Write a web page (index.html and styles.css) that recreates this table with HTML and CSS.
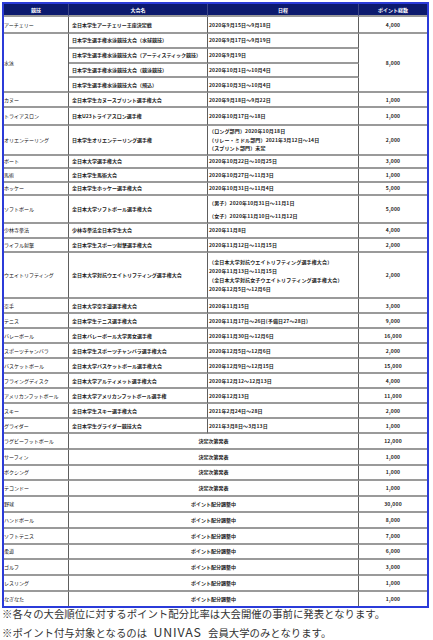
FILE: index.html
```html
<!DOCTYPE html>
<html lang="ja">
<head>
<meta charset="utf-8">
<title>ポイント配分</title>
<link rel="stylesheet" href="styles.css">
</head>
<body>
<div class="page">
<table class="pts">
<colgroup><col class="c1"><col class="c2"><col class="c3"><col class="c4"></colgroup>
<thead>
<tr class="rh"><th>競技</th><th>大会名</th><th>日程</th><th class="lc">ポイント総数</th></tr>
</thead>
<tbody>
<tr class="r17"><td class="sp">アーチェリー</td><td class="ev">全日本学生アーチェリー王座決定戦</td><td class="dt">2020年9月15日～9月18日</td><td class="pt">4,000</td></tr>
<tr class="rs"><td class="sp" rowspan="4">水泳</td><td class="ev">日本学生選手権水泳競技大会（水球競技）</td><td class="dt">2020年9月17日～9月19日</td><td class="pt" rowspan="4">8,000</td></tr>
<tr class="rs"><td class="ev">日本学生選手権水泳競技大会（アーティスティック競技）</td><td class="dt">2020年9月19日</td></tr>
<tr class="rs"><td class="ev">日本学生選手権水泳競技大会（競泳競技）</td><td class="dt">2020年10月1日～10月4日</td></tr>
<tr class="rs"><td class="ev">日本学生選手権水泳競技大会（飛込）</td><td class="dt">2020年10月3日～10月4日</td></tr>
<tr class="r15"><td class="sp">カヌー</td><td class="ev">全日本学生カヌースプリント選手権大会</td><td class="dt">2020年9月18日～9月22日</td><td class="pt">1,000</td></tr>
<tr class="r18"><td class="sp">トライアスロン</td><td class="ev">日本U23トライアスロン選手権</td><td class="dt">2020年10月17日～18日</td><td class="pt">1,000</td></tr>
<tr class="ror"><td class="sp">オリエンテーリング</td><td class="ev">日本学生オリエンテーリング選手権</td><td class="dt ml-or">（ロング部門）2020年10月18日<br>（リレー・ミドル部門）2021年3月12日～14日<br>（スプリント部門）未定</td><td class="pt">2,000</td></tr>
<tr class="r135"><td class="sp">ボート</td><td class="ev">全日本大学選手権大会</td><td class="dt">2020年10月22日～10月25日</td><td class="pt">3,000</td></tr>
<tr class="r135"><td class="sp">馬術</td><td class="ev">全日本学生馬術大会</td><td class="dt">2020年10月27日～11月3日</td><td class="pt">1,000</td></tr>
<tr class="r135"><td class="sp">ホッケー</td><td class="ev">全日本学生ホッケー選手権大会</td><td class="dt">2020年10月31日～11月4日</td><td class="pt">5,000</td></tr>
<tr class="rsb"><td class="sp">ソフトボール</td><td class="ev">全日本大学ソフトボール選手権大会</td><td class="dt ml-sb">（男子）2020年10月31日～11月1日<br>（女子）2020年11月10日～11月12日</td><td class="pt">5,000</td></tr>
<tr class="r145"><td class="sp">少林寺拳法</td><td class="ev">少林寺拳法全日本学生大会</td><td class="dt">2020年11月8日</td><td class="pt">4,000</td></tr>
<tr class="r145"><td class="sp">ライフル射撃</td><td class="ev">全日本学生スポーツ射撃選手権大会</td><td class="dt">2020年11月12日～11月15日</td><td class="pt">2,000</td></tr>
<tr class="rwl"><td class="sp">ウエイトリフティング</td><td class="ev">全日本大学対抗ウエイトリフティング選手権大会</td><td class="dt ml-wl">（全日本大学対抗ウエイトリフティング選手権大会）<br>2020年11月13日～11月15日<br>（全日本大学対抗女子ウエイトリフティング選手権大会）<br>2020年12月5日～12月6日</td><td class="pt">2,000</td></tr>
<tr class="r15"><td class="sp">空手</td><td class="ev">全日本大学空手道選手権大会</td><td class="dt">2020年11月15日</td><td class="pt">3,000</td></tr>
<tr class="r15"><td class="sp">テニス</td><td class="ev">全日本学生テニス選手権大会</td><td class="dt">2020年11月17日～26日(予備日27～28日)</td><td class="pt">9,000</td></tr>
<tr class="r15"><td class="sp">バレーボール</td><td class="ev">全日本バレーボール大学男女選手権</td><td class="dt">2020年11月30日～12月6日</td><td class="pt">16,000</td></tr>
<tr class="r15"><td class="sp">スポーツチャンバラ</td><td class="ev">全日本学生スポーツチャンバラ選手権大会</td><td class="dt">2020年12月5日～12月6日</td><td class="pt">2,000</td></tr>
<tr class="r15"><td class="sp">バスケットボール</td><td class="ev">全日本大学バスケットボール選手権大会</td><td class="dt">2020年12月9日～12月15日</td><td class="pt">15,000</td></tr>
<tr class="r15"><td class="sp">フライングディスク</td><td class="ev">全日本大学アルティメット選手権大会</td><td class="dt">2020年12月12～12月13日</td><td class="pt">4,000</td></tr>
<tr class="r15"><td class="sp">アメリカンフットボール</td><td class="ev">全日本大学アメリカンフットボール選手権</td><td class="dt">2020年12月13日</td><td class="pt">11,000</td></tr>
<tr class="r15"><td class="sp">スキー</td><td class="ev">全日本学生スキー選手権大会</td><td class="dt">2021年2月24日～28日</td><td class="pt">2,000</td></tr>
<tr class="r15"><td class="sp">グライダー</td><td class="ev">全日本学生グライダー競技大会</td><td class="dt">2021年3月8日～3月13日</td><td class="pt">1,000</td></tr>
<tr class="r158"><td class="sp">ラグビーフットボール</td><td class="mg" colspan="2">決定次第発表</td><td class="pt">12,000</td></tr>
<tr class="r158"><td class="sp">サーフィン</td><td class="mg" colspan="2">決定次第発表</td><td class="pt">1,000</td></tr>
<tr class="r158"><td class="sp">ボクシング</td><td class="mg" colspan="2">決定次第発表</td><td class="pt">1,000</td></tr>
<tr class="r158"><td class="sp">テコンドー</td><td class="mg" colspan="2">決定次第発表</td><td class="pt">1,000</td></tr>
<tr class="r158"><td class="sp">野球</td><td class="mg" colspan="2">ポイント配分調整中</td><td class="pt">30,000</td></tr>
<tr class="r158"><td class="sp">ハンドボール</td><td class="mg" colspan="2">ポイント配分調整中</td><td class="pt">8,000</td></tr>
<tr class="r158"><td class="sp">ソフトテニス</td><td class="mg" colspan="2">ポイント配分調整中</td><td class="pt">7,000</td></tr>
<tr class="r158"><td class="sp">柔道</td><td class="mg" colspan="2">ポイント配分調整中</td><td class="pt">6,000</td></tr>
<tr class="r158"><td class="sp">ゴルフ</td><td class="mg" colspan="2">ポイント配分調整中</td><td class="pt">3,000</td></tr>
<tr class="r158"><td class="sp">レスリング</td><td class="mg" colspan="2">ポイント配分調整中</td><td class="pt">1,000</td></tr>
<tr class="r145 last"><td class="sp">なぎなた</td><td class="mg" colspan="2">ポイント配分調整中</td><td class="pt">1,000</td></tr>
</tbody>
</table>
<p class="note">※各々の大会順位に対するポイント配分比率は大会開催の事前に発表となります。</p>
<p class="note">※ポイント付与対象となるのは <span class="en">UNIVAS</span> 会員大学のみとなります。</p>
</div>
</body>
</html>
```

FILE: styles.css
```css
html, body {
  margin: 0;
  padding: 0;
  background: #ffffff;
}

.page {
  padding: 2px 4px 0 2px;
  font-family: "Noto Sans CJK JP", "Noto Sans", sans-serif;
}

.pts {
  width: 427px;
  table-layout: fixed;
  border: 2px solid #2b3bd9;
  border-collapse: separate;
  border-spacing: 0;
  font-size: 5px;
  line-height: 6px;
  color: #1a1a1a;
}

.c1 { width: 65px; }
.c2 { width: 139px; }
.c3 { width: 151px; }
.c4 { width: 68px; }

.pts th,
.pts td {
  padding: 0 1px;
  border-right: 1px solid #5e5e5e;
  border-bottom: 2px solid #9a9a9a;
  vertical-align: middle;
  text-align: left;
  white-space: nowrap;
  overflow: hidden;
  box-sizing: border-box;
}

.pts th {
  background: #0c1a6e;
  color: #ffffff;
  font-weight: 700;
  text-align: center;
  border-right-color: #3b4688;
}

.pts td.sp {
  padding-left: 0;
  font-weight: 400;
  color: #111;
}

.pts td.ev {
  padding-left: 3px;
  font-weight: 700;
}

.pts td.dt {
  padding-left: 1px;
  font-weight: 700;
  letter-spacing: 0.15px;
}

.pts th.lc,
.pts td.pt {
  border-right: none;
}

.pts td.pt {
  text-align: center;
  font-weight: 700;
  letter-spacing: 0.2px;
}

.pts td.mg {
  text-align: center;
  font-weight: 700;
}

.pts tr.last td {
  border-bottom: none;
}

.ml-or { line-height: 8.4px; }
.ml-sb { line-height: 13px; }
.ml-wl { line-height: 9px; }

.rh { height: 13px; }
.r17 { height: 17px; }
.rs { height: 14.75px; }
.r15 { height: 15px; }
.r18 { height: 18px; }
.ror { height: 29.5px; }
.r135 { height: 13.5px; }
.rsb { height: 26px; }
.r145 { height: 14.5px; }
.rwl { height: 46px; }
.r158 { height: 15.8px; }

.note {
  margin: -3px 0 0 0;
  font-size: 10.4px;
  line-height: 18px;
  color: #333;
  white-space: nowrap;
}

.note + .note {
  margin-top: 0;
}

.note .en {
  font-size: 12.4px;
  letter-spacing: 0.8px;
  margin: 0 4px;
}
```
